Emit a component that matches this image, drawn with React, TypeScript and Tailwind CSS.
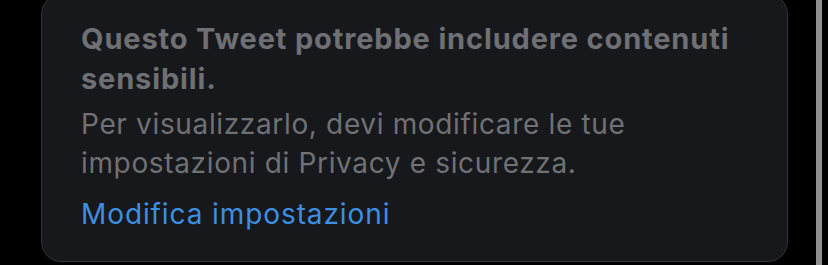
const App = () => {
  return (
    <div
      className="flex h-[265px] w-[828px] overflow-hidden bg-black"
      style={{ fontFamily: "Inter, 'Noto Sans', sans-serif" }}
    >
      <div className="ml-[41px] -mt-[6px] h-[268px] w-[747px] shrink-0 rounded-[20px] border border-[#34353a] bg-[#17181c] pl-[39px] pr-[20px] pt-[24px]">
        <h2 className="text-[29px] font-bold leading-[40px] tracking-[0.85px] text-[#6f7074]">
          Questo Tweet potrebbe includere contenuti sensibili.
        </h2>
        <p className="mt-[6px] text-[28px] leading-[39px] tracking-[0.65px] text-[#707175]">
          Per visualizzarlo, devi modificare le tue
          <br />
          impostazioni di Privacy e sicurezza.
        </p>
        <a className="mt-[12px] block text-[28px] leading-[39px] tracking-[0.9px] text-[#3d8fe2]">
          Modifica impostazioni
        </a>
      </div>
      <div className="ml-[28px] h-full w-[6px] shrink-0 bg-[#8e8e8e]" />
    </div>
  );
};

export default App;
